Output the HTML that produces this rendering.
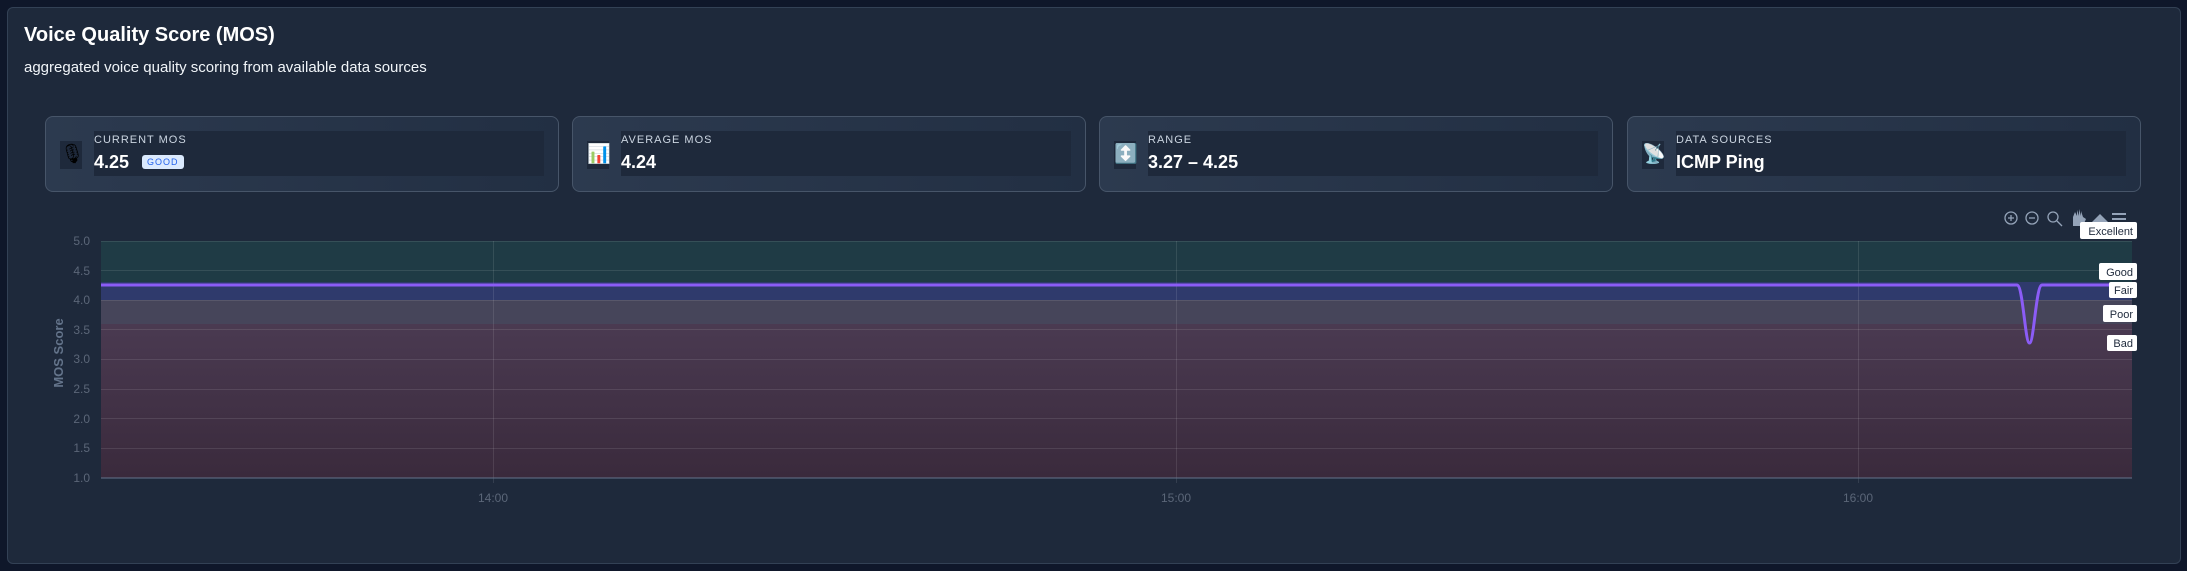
<!DOCTYPE html>
<html><head><meta charset="utf-8"><style>
html,body{margin:0;padding:0;width:2187px;height:571px;background:#0f172a;overflow:hidden;font-family:"Liberation Sans",sans-serif}
.panel{position:absolute;left:7px;top:7px;width:2172px;height:555px;background:#1e293b;border:1px solid #334155;border-radius:6px}
.t{position:absolute;left:24px;top:24px;color:#fff;font-size:20px;font-weight:bold}
.s{position:absolute;left:24px;top:59px;color:#f1f5f9;font-size:15px}
.card{position:absolute;top:116px;width:512px;height:74px;border:1px solid #475569;border-radius:8px;background:linear-gradient(90deg,#2c3a4f,#222f43)}
.ic{position:absolute;left:14px;top:24px;width:22px;height:28px;background:#1e293b;font-size:19px;line-height:28px;text-align:center}
.box{position:absolute;left:48px;top:14px;right:14px;height:45px;background:#1e293b}
.lb{position:absolute;left:0;top:3px;color:#cbd5e1;font-size:11px;letter-spacing:1px}
.v{position:absolute;left:0;top:21px;color:#fff;font-size:18px;font-weight:bold}
.bd{display:inline-block;margin-left:13px;background:#dbeafe;color:#2563eb;font-size:9px;letter-spacing:1px;padding:2px 5px;border-radius:3px;vertical-align:3px;font-weight:normal}
</style></head><body>
<div class="panel"></div>
<div class="t">Voice Quality Score (MOS)</div>
<div class="s">aggregated voice quality scoring from available data sources</div>
<div class="card" style="left:45px"><div class="ic">🎙</div><div class="box"><div class="lb">CURRENT MOS</div><div class="v">4.25<span class="bd">GOOD</span></div></div></div>
<div class="card" style="left:572px"><div class="ic">📊</div><div class="box"><div class="lb">AVERAGE MOS</div><div class="v">4.24</div></div></div>
<div class="card" style="left:1099px"><div class="ic">↕️</div><div class="box"><div class="lb">RANGE</div><div class="v">3.27 – 4.25</div></div></div>
<div class="card" style="left:1627px"><div class="ic">📡</div><div class="box"><div class="lb">DATA SOURCES</div><div class="v">ICMP Ping</div></div></div>
<svg width="2187" height="571" style="position:absolute;left:0;top:0" font-family="Liberation Sans, sans-serif">
<defs><linearGradient id="r" x1="0" y1="0" x2="0" y2="1"><stop offset="0" stop-color="#4a3a51"/><stop offset="1" stop-color="#3a2a3c"/></linearGradient></defs>
<rect x="101" y="241" width="2031" height="41" fill="#1f3b45"/>
<rect x="101" y="282" width="2031" height="18" fill="#2f3a6c"/>
<rect x="101" y="300" width="2031" height="24" fill="#46455a"/>
<rect x="101" y="324" width="2031" height="154" fill="url(#r)"/>
<g stroke="#ffffff" stroke-opacity="0.1" stroke-width="1">
<line x1="101" y1="241.5" x2="2132" y2="241.5"/><line x1="101" y1="270.5" x2="2132" y2="270.5"/><line x1="101" y1="300.5" x2="2132" y2="300.5"/><line x1="101" y1="329.5" x2="2132" y2="329.5"/><line x1="101" y1="359.5" x2="2132" y2="359.5"/><line x1="101" y1="389.5" x2="2132" y2="389.5"/><line x1="101" y1="418.5" x2="2132" y2="418.5"/><line x1="101" y1="448.5" x2="2132" y2="448.5"/>
<line x1="493.5" y1="241" x2="493.5" y2="483"/><line x1="1176.5" y1="241" x2="1176.5" y2="483"/><line x1="1858.5" y1="241" x2="1858.5" y2="483"/>
</g>
<line x1="101" y1="478" x2="2132" y2="478" stroke="#64748b" stroke-width="1"/>
<path d="M101 285 H2017 C2023 285 2025 343 2029.5 343 C2034 343 2036 285 2042 285 H2132" fill="none" stroke="#8b5cf6" stroke-width="3"/>
<g fill="#5b6678" font-size="12" text-anchor="end">
<text x="90" y="245">5.0</text><text x="90" y="275">4.5</text><text x="90" y="304">4.0</text><text x="90" y="334">3.5</text><text x="90" y="363">3.0</text><text x="90" y="393">2.5</text><text x="90" y="423">2.0</text><text x="90" y="452">1.5</text><text x="90" y="482">1.0</text>
</g>
<g fill="#5b6678" font-size="12" text-anchor="middle"><text x="493" y="502">14:00</text><text x="1176" y="502">15:00</text><text x="1858" y="502">16:00</text></g>
<text transform="translate(63,353) rotate(-90)" fill="#64748b" font-size="13" font-weight="bold" text-anchor="middle">MOS Score</text>
<g fill="none" stroke="#94a3b8" stroke-width="1.3">
<circle cx="2011" cy="218" r="6"/><path d="M2008 218h6M2011 215v6"/>
<circle cx="2032" cy="218" r="6"/><path d="M2029 218h6"/>
<circle cx="2053" cy="217" r="5"/><path d="M2057 221l5 5"/>
</g>
<path d="M2073 226v-9l2-5 2 4v-6l2 6v-7l2 7v-5l2 6 3 2-3 7z" fill="#94a3b8"/>
<path d="M2092 222l8-8 8 8h-3v6h-10v-6z" fill="#94a3b8"/>
<path d="M2112 214h14M2112 219h14M2112 224h14" stroke="#94a3b8" stroke-width="2"/>
<g font-size="11" fill="#1e293b" text-anchor="end">
<rect x="2080" y="222" width="57" height="17" rx="2" fill="#fff"/><text x="2133" y="235">Excellent</text>
<rect x="2099" y="263" width="38" height="17" rx="2" fill="#fff"/><text x="2133" y="276">Good</text>
<rect x="2109" y="282" width="28" height="16" rx="2" fill="#fff"/><text x="2133" y="294">Fair</text>
<rect x="2103" y="305" width="34" height="17" rx="2" fill="#fff"/><text x="2133" y="318">Poor</text>
<rect x="2107" y="335" width="30" height="16" rx="2" fill="#fff"/><text x="2133" y="347">Bad</text>
</g>
</svg>
</body></html>
